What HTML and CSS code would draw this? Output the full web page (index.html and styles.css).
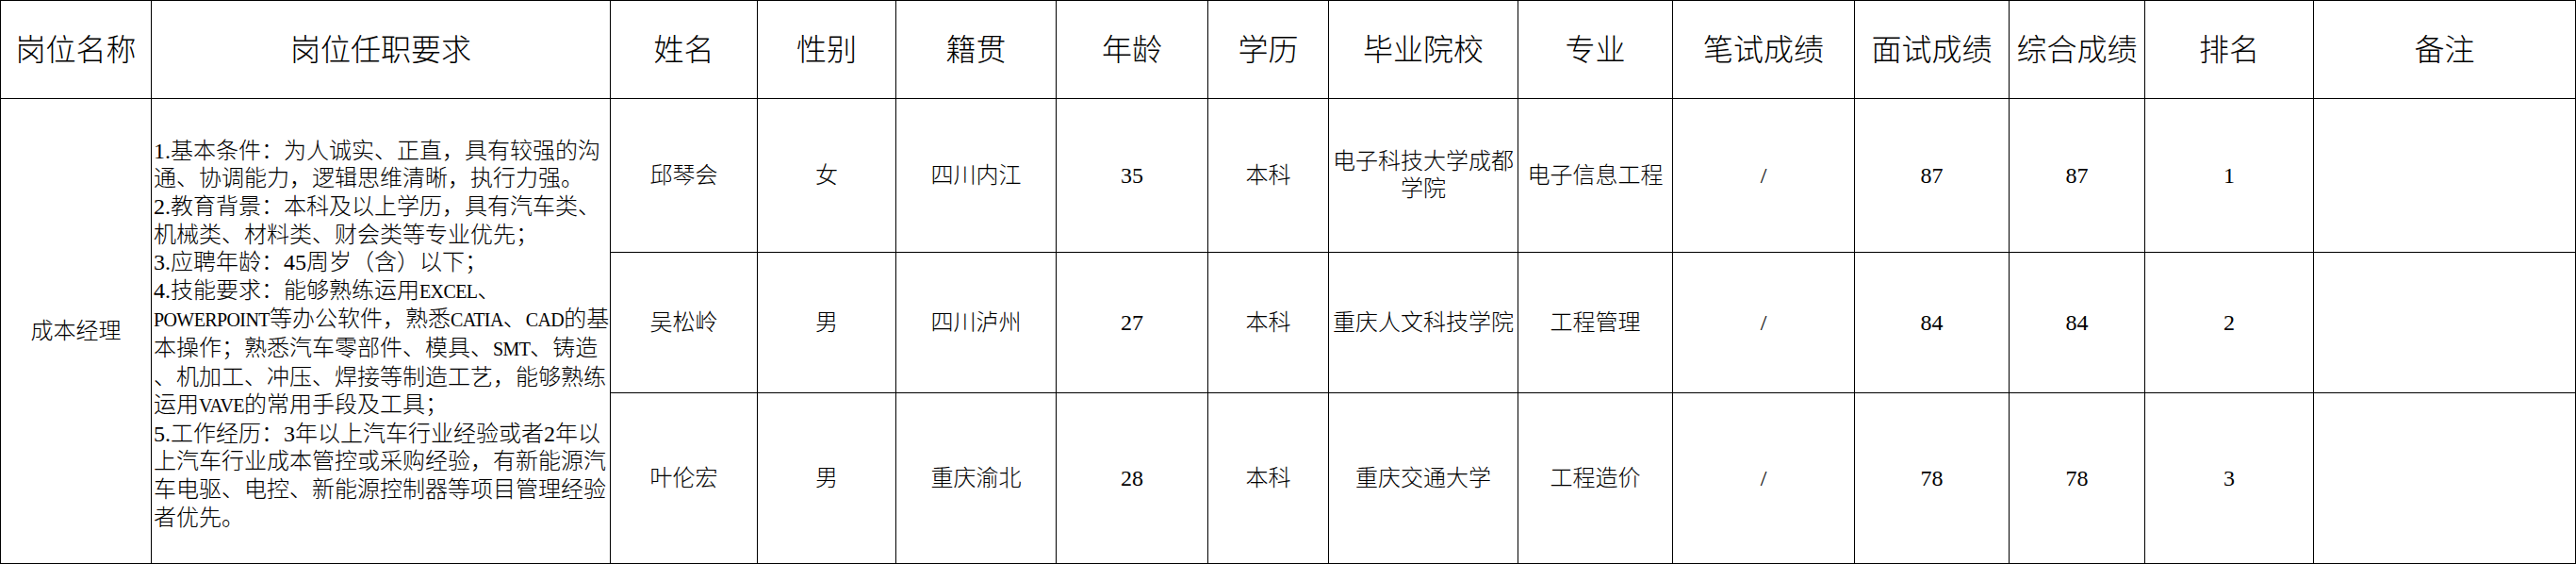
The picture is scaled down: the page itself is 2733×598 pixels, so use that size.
FILE: index.html
```html
<!DOCTYPE html>
<html lang="zh-CN">
<head>
<meta charset="utf-8">
<title>成本经理</title>
<link rel="stylesheet" href="styles.css">
</head>
<body>
<table class="sheet">
  <colgroup>
    <col class="w160"><col class="w487"><col class="w156"><col class="w147"><col class="w170"><col class="w161"><col class="w128"><col class="w201"><col class="w164"><col class="w193"><col class="w164"><col class="w144"><col class="w179"><col class="w278">
  </colgroup>
  <thead>
    <tr class="head">
      <th>岗位名称</th>
      <th>岗位任职要求</th>
      <th>姓名</th>
      <th>性别</th>
      <th>籍贯</th>
      <th>年龄</th>
      <th>学历</th>
      <th>毕业院校</th>
      <th>专业</th>
      <th>笔试成绩</th>
      <th>面试成绩</th>
      <th>综合成绩</th>
      <th>排名</th>
      <th>备注</th>
    </tr>
  </thead>
  <tbody>
    <tr class="r1">
      <td rowspan="3">成本经理</td>
      <td rowspan="3" class="req"><span class="n">1.</span>基本条件：为人诚实、正直，具有较强的沟<br>通、协调能力，逻辑思维清晰，执行力强。<br><span class="n">2.</span>教育背景：本科及以上学历，具有汽车类、<br>机械类、材料类、财会类等专业优先；<br><span class="n">3.</span>应聘年龄：<span class="n">45</span>周岁（含）以下；<br><span class="n">4.</span>技能要求：能够熟练运用<span class="lat">EXCEL</span>、<br><span class="lat">POWERPOINT</span>等办公软件，熟悉<span class="lat">CATIA</span>、<span class="lat">CAD</span>的基<br>本操作；熟悉汽车零部件、模具、<span class="lat">SMT</span>、铸造<br>、机加工、冲压、焊接等制造工艺，能够熟练<br>运用<span class="lat">VAVE</span>的常用手段及工具；<br><span class="n">5.</span>工作经历：<span class="n">3</span>年以上汽车行业经验或者<span class="n">2</span>年以<br>上汽车行业成本管控或采购经验，有新能源汽<br>车电驱、电控、新能源控制器等项目管理经验<br>者优先。</td>
      <td>邱琴会</td>
      <td>女</td>
      <td>四川内江</td>
      <td class="num">35</td>
      <td>本科</td>
      <td>电子科技大学成都<br>学院</td>
      <td>电子信息工程</td>
      <td class="num">/</td>
      <td class="num">87</td>
      <td class="num">87</td>
      <td class="num">1</td>
      <td></td>
    </tr>
    <tr class="r2">
      <td>吴松岭</td>
      <td>男</td>
      <td>四川泸州</td>
      <td class="num">27</td>
      <td>本科</td>
      <td>重庆人文科技学院</td>
      <td>工程管理</td>
      <td class="num">/</td>
      <td class="num">84</td>
      <td class="num">84</td>
      <td class="num">2</td>
      <td></td>
    </tr>
    <tr class="r3">
      <td>叶伦宏</td>
      <td>男</td>
      <td>重庆渝北</td>
      <td class="num">28</td>
      <td>本科</td>
      <td>重庆交通大学</td>
      <td>工程造价</td>
      <td class="num">/</td>
      <td class="num">78</td>
      <td class="num">78</td>
      <td class="num">3</td>
      <td></td>
    </tr>
  </tbody>
</table>
</body>
</html>
```
FILE: styles.css
```css
html, body {
  margin: 0;
  padding: 0;
  background: #ffffff;
}

.sheet {
  border-collapse: collapse;
  table-layout: fixed;
  width: 2733px;
  color: #000;
  font-family: "Liberation Serif", "Noto Sans CJK SC", serif;
  font-weight: 300;
}

.w160 { width: 160px; }
.w487 { width: 487px; }
.w156 { width: 156px; }
.w147 { width: 147px; }
.w170 { width: 170px; }
.w161 { width: 161px; }
.w128 { width: 128px; }
.w201 { width: 201px; }
.w164 { width: 164px; }
.w193 { width: 193px; }
.w144 { width: 144px; }
.w179 { width: 179px; }
.w278 { width: 278px; }

.sheet th,
.sheet td {
  border: 1px solid #000;
  padding: 0 2px;
  text-align: center;
  vertical-align: middle;
  overflow: hidden;
}

.sheet th {
  font-size: 32px;
  font-weight: 300;
  line-height: 38px;
  white-space: nowrap;
}

.sheet td {
  font-size: 24px;
  line-height: 29px;
}

.head { height: 104px; }
.r1 { height: 163px; }
.r2 { height: 149px; }
.r3 { height: 181px; }

.sheet td.req {
  text-align: left;
  padding: 8px 0 0 2px;
  line-height: 29.6px;
  white-space: nowrap;
}

.num {
  font-family: "Liberation Serif", serif;
}

.n {
  font-family: "Liberation Serif", serif;
}

.lat {
  font-family: "Liberation Serif", serif;
  font-size: 20px;
  letter-spacing: -0.6px;
}
```
